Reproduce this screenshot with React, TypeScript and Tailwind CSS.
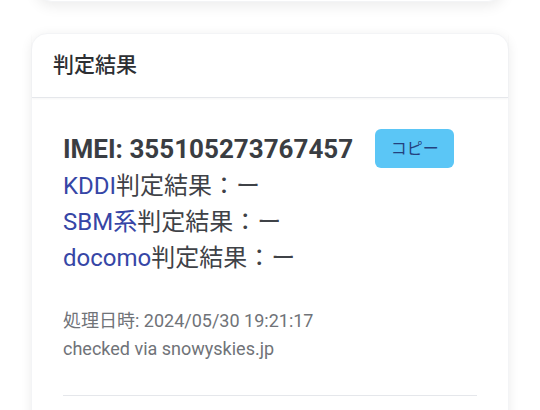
import React from 'react';

const font = { fontFamily: "Roboto, 'Noto Sans CJK JP', sans-serif" };

export default function App() {
  const carriers = ['KDDI', 'SBM系', 'docomo'];

  return (
    <div className="h-[410px] bg-white overflow-hidden" style={font}>
      {/* previous card, only its bottom edge shows */}
      <div className="mx-[36px] -mt-[30px] h-[32px] rounded-2xl bg-white shadow-[0_4px_14px_rgba(0,0,0,0.08)] border border-gray-100" />

      <div className="mx-[31px] mt-[31px] rounded-2xl bg-white shadow-[0_2px_12px_rgba(0,0,0,0.08)] border border-gray-100">
        <div className="h-[64px] flex items-center px-[21px] border-b border-gray-200 shadow-[0_1px_2px_rgba(0,0,0,0.04)]">
          <h2 className="text-[21px] font-medium text-[#2d2f33]">判定結果</h2>
        </div>

        <div className="px-[31px] pt-[31px] pb-[40px]">
          <div className="flex items-center gap-[22px] h-[39px]">
            <span className="text-[26px] font-bold text-[#3a3d42] leading-none">IMEI: 355105273767457</span>
            <button className="w-[79px] h-[39px] rounded-md bg-[#5bc6f6] text-[16px] text-[#24417e]">コピー</button>
          </div>

          <div className="text-[24px] leading-[36px] text-[#3f4247]">
            {carriers.map((c) => (
              <div key={c}>
                <span className="text-[#3646a6]">{c}</span>判定結果：ー
              </div>
            ))}
          </div>

          <div className="mt-[31px] text-[18px] leading-[28px] text-[#707378]">
            <div>処理日時: 2024/05/30 19:21:17</div>
            <div>checked via snowyskies.jp</div>
          </div>

          <div className="mt-[32px] border-t border-gray-200" />
        </div>
      </div>
    </div>
  );
}
